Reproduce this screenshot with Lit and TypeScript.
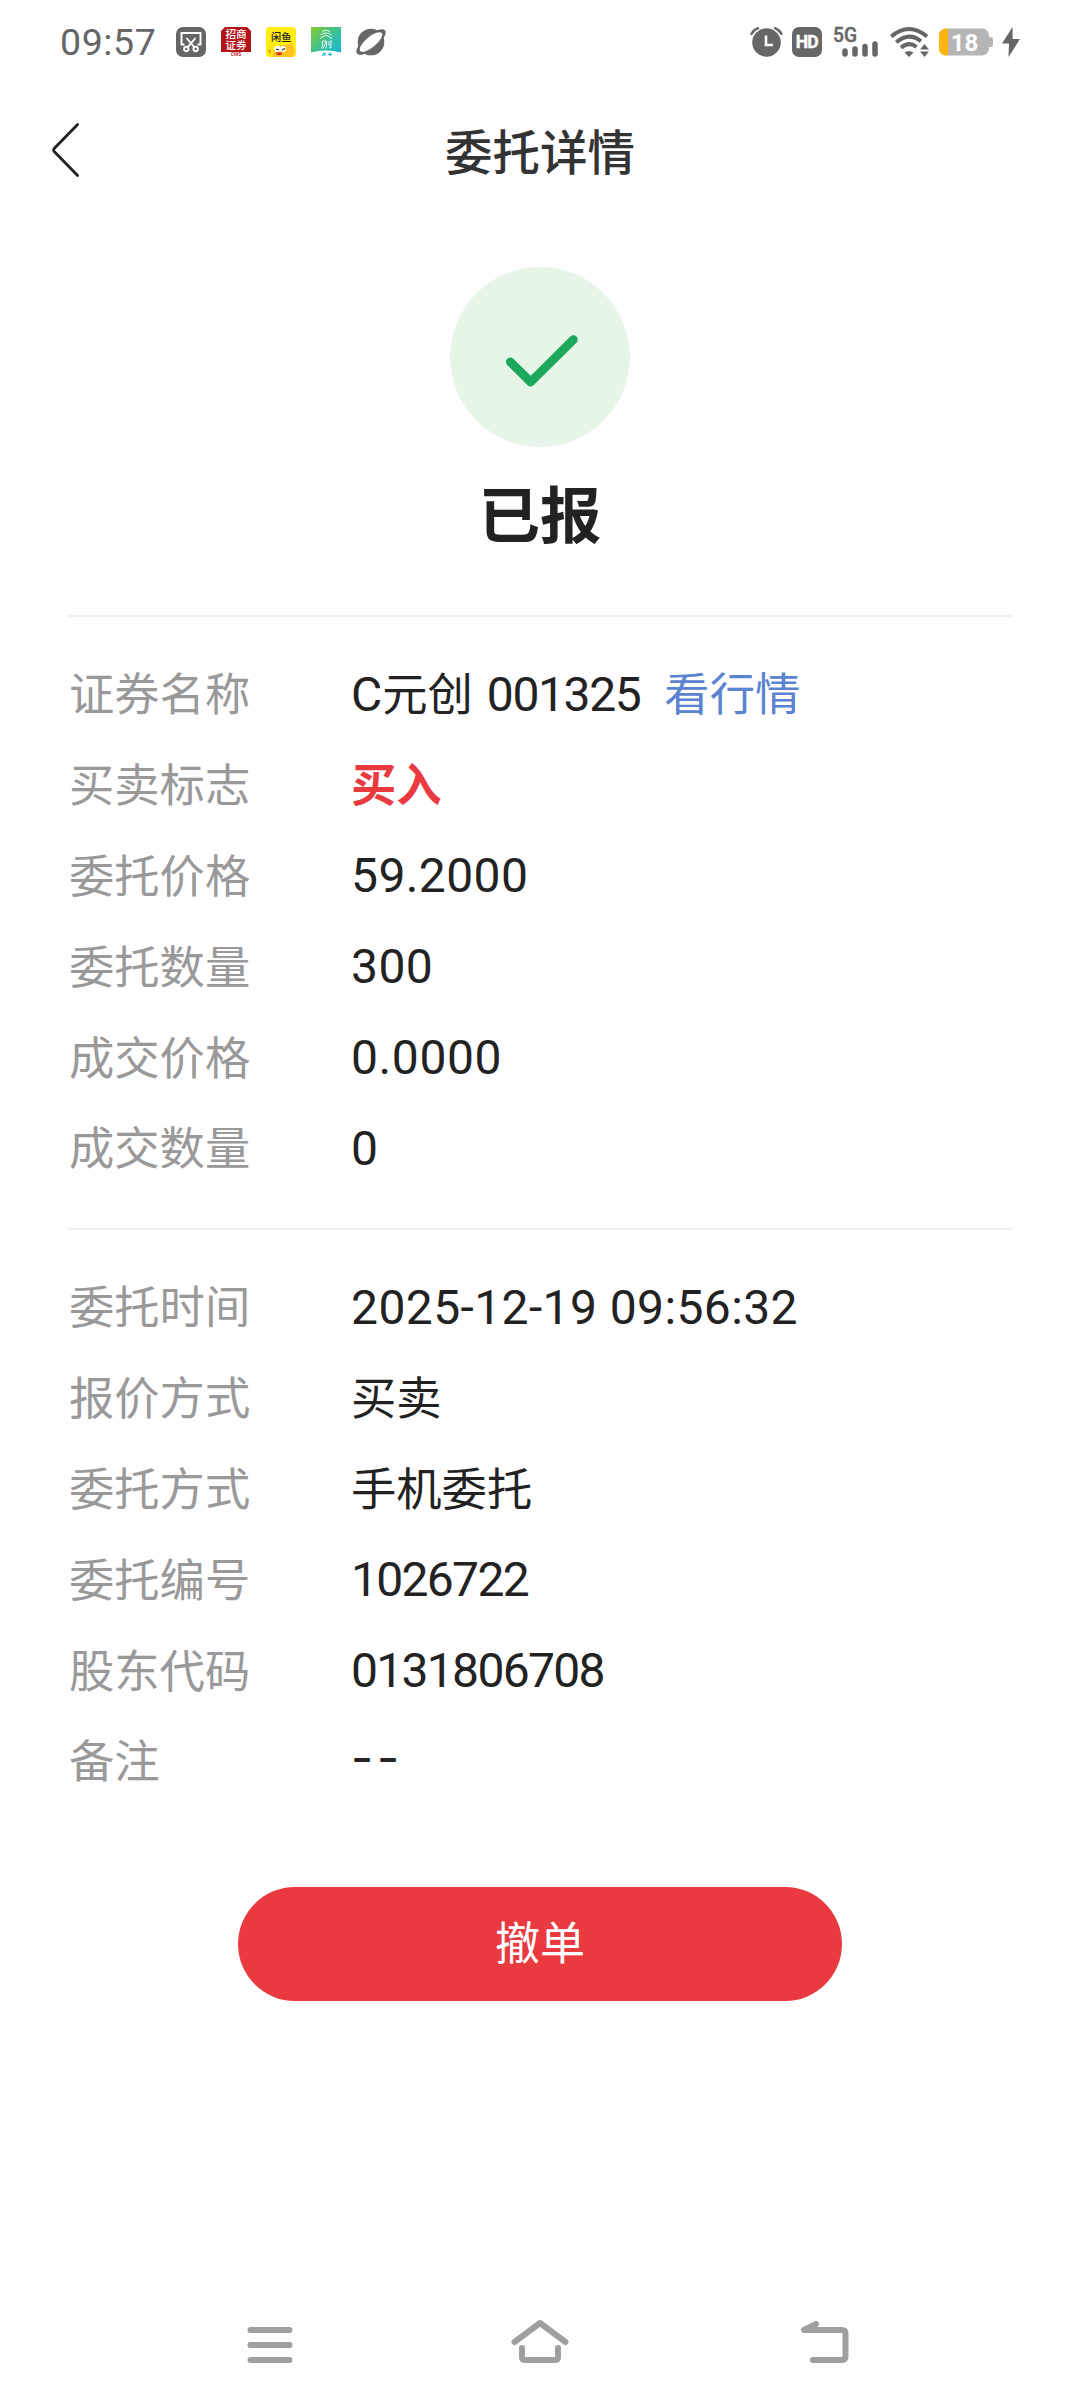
import { LitElement, html, css } from "lit";
import { customElement, property } from "lit/decorators.js";

interface Field {
  label: string;
  value: string;
  tracking?: number;
  kind?: "number" | "text" | "buy" | "dashes";
}

const orderFields: Field[] = [
  { label: "买卖标志", value: "买入", kind: "buy" },
  { label: "委托价格", value: "59.2000", kind: "number", tracking: 0.4 },
  { label: "委托数量", value: "300", kind: "number", tracking: 0.4 },
  { label: "成交价格", value: "0.0000", kind: "number", tracking: 0.6 },
  { label: "成交数量", value: "0", kind: "number", tracking: 0.6 },
];

const metaFields: Field[] = [
  { label: "委托时间", value: "2025-12-19 09:56:32", kind: "number", tracking: 0.4 },
  { label: "报价方式", value: "买卖" },
  { label: "委托方式", value: "手机委托" },
  { label: "委托编号", value: "1026722", kind: "number", tracking: -1.7 },
  { label: "股东代码", value: "0131806708", kind: "number", tracking: -1.7 },
  { label: "备注", value: "--", kind: "dashes", tracking: 4 },
];

@customElement("status-bar")
class StatusBar extends LitElement {
  static styles = css`
    :host {
      display: flex;
      justify-content: space-between;
      align-items: center;
      height: 84px;
      padding: 0 60px 0 60px;
      box-sizing: border-box;
      color: #666;
      font-family: Roboto, "Noto Sans CJK SC", sans-serif;
    }
    .side { display: flex; align-items: center; }
    .left { gap: 15px; }
    .time { width: 101px; font-size: 37.5px; line-height: 40px; letter-spacing: 0.6px; white-space: nowrap; }
    svg { display: block; flex: none; overflow: visible; }
    .hd { margin-left: 9px; }
    .signal { margin-left: 11px; }
    .wifi { margin-left: 12px; }
    .battery { margin-left: 10px; }
    .bolt { margin-left: 9px; }
    .b { font-weight: 700; }
    .m { font-weight: 500; }
  `;

  render() {
    return html`
      <div class="side left">
        <span class="time">09:57</span>
        <svg width="30" height="30" viewBox="0 0 30 30">
          <rect width="30" height="30" rx="7" fill="#666" />
          <g fill="none" stroke="#fff" stroke-width="1.9">
            <path d="M8.5 17.500H5.5V6h19v11.500h-3" />
            <path d="M10.5 11l7.8 9.2M19.5 11l-7.8 9.2" />
            <circle cx="10.3" cy="22" r="2.2" />
            <circle cx="19.7" cy="22" r="2.2" />
          </g>
        </svg>
        <svg width="30" height="30" viewBox="0 0 30 30">
          <path d="M4 0h22l4 4v21H0V4z" fill="#b3141a" />
          <rect y="25" width="30" height="5" fill="#fff" />
          <text class="m" x="15" y="11.4" font-size="10.6" text-anchor="middle" fill="#fff">招商</text>
          <text class="m" x="15" y="22.2" font-size="10.6" text-anchor="middle" fill="#fff">证券</text>
          <text class="b" x="15" y="29.400" font-size="4.8" text-anchor="middle" fill="#c8333a">CMS</text>
        </svg>
        <svg width="30" height="30" viewBox="0 0 30 30">
          <rect width="30" height="30" rx="4" fill="#ffec14" />
          <path d="M7 30c-1-5 1-9 6-11 6-2 11 0 12-4 4 5 4 11 2 15z" fill="#ffc21c" />
          <path d="M2 22l3 1 0 4-3-2z" fill="#f0b010" />
          <circle cx="11.5" cy="22" r="3.2" fill="#fff" />
          <circle cx="17" cy="22" r="3" fill="#fff" />
          <path d="M10 22l3 1M16 23l3-1.5" stroke="#222" stroke-width="1.3" />
          <ellipse cx="13" cy="26.6" rx="3" ry="1.6" fill="#d4352b" />
          <text class="m" x="15.2" y="13.6" font-size="10.2" text-anchor="middle" fill="#222">闲鱼</text>
        </svg>
        <svg width="30" height="30" viewBox="0 0 30 30">
          <defs>
            <linearGradient id="g" x1="0" y1="0" x2="1" y2="1">
              <stop offset="0" stop-color="#86cb2d" />
              <stop offset=".55" stop-color="#33bfa0" />
              <stop offset="1" stop-color="#14b4e8" />
            </linearGradient>
          </defs>
          <rect width="30" height="30" fill="url(#g)" />
          <path d="M0 25.5Q15 21.5 30 25.5V30H0z" fill="#fff" />
          <g fill="none" stroke="#e6fbf2" stroke-width="1">
            <path d="M11 5q4-3.600 8 0M9.500 8q5.500-4 11 0M9 11.500l6-3.500 6 3.500" />
            <path d="M11.500 14v4.500l-1 3M11.500 14h4l-3.500 7.500M15.500 14v5l-1 2.500M18 14v5M20 13v7.500l-2 .5" />
          </g>
          <path d="M11.500 29l1.500-3.300M14 25.700v3.300M17 27.400h4M19 25.500v3.600" stroke="#25b5dd" stroke-width="1.200" />
        </svg>
        <svg width="30" height="30" viewBox="0 0 30 30">
          <circle cx="15" cy="15" r="13.300" fill="#666" />
          <ellipse cx="15" cy="15" rx="18.200" ry="6.800" fill="#666" transform="rotate(-40 15 15)" />
          <ellipse cx="15" cy="15" rx="14" ry="5.200" fill="#fefefe" transform="rotate(-40 15 15)" />
        </svg>
      </div>
      <div class="side">
        <svg class="alarm" width="33" height="30" viewBox="0 0 33 30">
          <circle cx="16.500" cy="15.500" r="14.300" fill="#666" />
          <path d="M1.500 7Q3.500 3 8 1.200M31.500 7Q29.500 3 25 1.200" fill="none" stroke="#fefefe" stroke-width="5" />
          <path d="M1.500 7Q3.500 3 8 1.200M31.500 7Q29.500 3 25 1.200" fill="none" stroke="#666" stroke-width="2.400" stroke-linecap="round" />
          <path d="M16 8.500V18h7" fill="none" stroke="#fff" stroke-width="2.600" />
        </svg>
        <svg class="hd" width="30" height="30" viewBox="0 0 30 30">
          <rect width="30" height="30" rx="7" fill="#666" />
          <text class="b" x="15.200" y="21.300" font-size="17.500" text-anchor="middle" textLength="23" fill="#fff" stroke="#fff" stroke-width=".4">HD</text>
        </svg>
        <svg class="signal" width="45" height="30" viewBox="0 0 45 30">
          <text class="m" x="0" y="14.500" font-size="19.500" textLength="24" lengthAdjust="spacingAndGlyphs" fill="#666" stroke="#666" stroke-width=".4">5G</text>
          <path d="M12 24v3M22 22v5M32 19.500V27M42 17v10" stroke="#666" stroke-width="5.500" stroke-linecap="round" />
        </svg>
        <svg class="wifi" width="39" height="30" viewBox="0 0 39 30">
          <g fill="none" stroke="#666" stroke-width="4">
            <path d="M1.300 9.500Q19 -5.500 37 9.500" />
            <path d="M6.300 15.300Q19 4.500 31 14.300" />
            <path d="M11 20.800Q19 14 26.500 20" />
          </g>
          <path d="M14.500 25.500Q19 22.300 23.500 25.500L19 30z" fill="#666" />
          <path d="M34.500 17l4.500 5.500h-9zM34.500 30l4.500-5.500h-9z" fill="#666" />
        </svg>
        <svg class="battery" width="54" height="28" viewBox="0 0 54 28">
          <defs><clipPath id="c"><rect y=".5" width="50" height="27" rx="7" /></clipPath></defs>
          <path d="M50 9h1.500q2.500 0 2.500 2.500v5q0 2.500-2.500 2.500H50z" fill="#b5b5b5" />
          <g clip-path="url(#c)">
            <rect width="50" height="28" fill="#b5b5b5" />
            <rect width="9" height="28" fill="#ffb50f" />
          </g>
          <text class="b" x="25.500" y="22.500" font-size="24" text-anchor="middle" fill="#fff">18</text>
        </svg>
        <svg class="bolt" width="18" height="30" viewBox="0 0 18 30">
          <path d="M10.500 0L0 16.500h7L6.500 30 18 12h-7.300z" fill="#666" />
        </svg>
      </div>
    `;
  }
}

@customElement("detail-row")
class DetailRow extends LitElement {
  static styles = css`
    :host {
      display: flex;
      align-items: center;
      height: 90.800px;
      font-size: 45.300px;
      line-height: 84px;
      white-space: nowrap;
      color: #222;
    }
    .label, .text, .buy { padding-bottom: 6px; }
    .label { flex: 0 0 282px; color: #999; }
    .number { padding-top: 1px; font-family: Roboto, sans-serif; font-size: 48px; }
    .dashes { padding-bottom: 6px; font-family: Inter, sans-serif; font-size: 48px; }
    .buy { color: #e93a3f; font-weight: 700; }
  `;

  @property({ attribute: false }) field: Field = { label: "", value: "" };

  render() {
    const { label, value, kind = "text", tracking = 0 } = this.field;
    return html`
      <span class="label">${label}</span>
      <slot><span class=${kind} style="letter-spacing:${tracking}px">${value}</span></slot>
    `;
  }
}

@customElement("app-root")
class AppRoot extends LitElement {
  static styles = css`
    :host {
      display: flex;
      flex-direction: column;
      height: 2408px;
      background: #fefefe;
      color: #222;
      font-family: "Noto Sans CJK SC", sans-serif;
    }
    svg { display: block; }
    .header {
      display: grid;
      grid-template-columns: 1fr auto 1fr;
      align-items: center;
      height: 132px;
      padding: 0 51px;
    }
    .title { padding-bottom: 1px; font-size: 47.500px; font-weight: 500; line-height: 60px; color: #333; }
    .result {
      display: flex;
      flex-direction: column;
      align-items: center;
      padding-top: 51px;
      height: 347px;
      box-sizing: border-box;
    }
    .badge { width: 180px; height: 180px; border-radius: 50%; background: #e7f5e9; }
    .state { margin-top: 20px; font-size: 61.500px; font-weight: 700; line-height: 90px; }
    .section { margin: 0 68px; padding: 32px 1px 0; border-top: 2px solid #f0f0f0; }
    .first { height: 613px; box-sizing: border-box; margin-top: 52px; }
    .security { display: flex; align-items: center; }
    .cjk, .link { padding-bottom: 6px; }
    .num { padding-top: 1px; font-family: Roboto, sans-serif; font-size: 48px; letter-spacing: -1.400px; }
    .letter { padding-top: 1px; font-family: Roboto, sans-serif; font-size: 48px; }
    .space { width: 14px; }
    .link { margin-left: 24px; color: #5b84d0; }
    .cancel {
      align-self: center;
      width: 604px;
      height: 114px;
      margin-top: 80px;
      border: 0;
      border-radius: 57px;
      background: #e93a3f;
      color: #fff;
      font: 400 45px/108px "Noto Sans CJK SC", sans-serif;
      padding: 0 0 6px;
    }
    .nav {
      display: grid;
      grid-template-columns: 264px 291px auto;
      justify-content: start;
      margin-top: auto;
      height: 93px;
      padding-left: 246px;
    }
    .nav svg { fill: none; stroke: #9f9f9f; stroke-width: 6; stroke-linecap: round; stroke-linejoin: round; }
  `;

  render() {
    return html`
      <status-bar></status-bar>
      <div class="header">
        <svg width="30" height="56" viewBox="0 0 30 56">
          <path d="M26.600 2.500L3.200 26.500Q2 28 3.200 29.500L26.600 53.500" fill="none" stroke="#222" stroke-width="2.800" stroke-linecap="round" />
        </svg>
        <span class="title">委托详情</span>
      </div>
      <div class="result">
        <svg class="badge" viewBox="0 0 180 180">
          <path d="M60.300 94.800L80.700 115L123.400 72.600" fill="none" stroke="#1ca95b" stroke-width="8.800" stroke-linecap="round" stroke-linejoin="round" />
        </svg>
        <div class="state">已报</div>
      </div>
      <div class="section first">
        <detail-row .field=${{ label: "证券名称", value: "" }}>
          <div class="security">
            <span class="letter">C</span><span class="cjk">元创</span><span class="space"></span>
            <span class="num">001325</span><span class="link">看行情</span>
          </div>
        </detail-row>
        ${orderFields.map((f) => html`<detail-row .field=${f}></detail-row>`)}
      </div>
      <div class="section">
        ${metaFields.map((f) => html`<detail-row .field=${f}></detail-row>`)}
      </div>
      <button class="cancel">撤单</button>
      <div class="nav">
        <svg width="48" height="52" viewBox="0 0 48 52">
          <path d="M4.500 15h39M4.500 30h39M4.500 45h39" />
        </svg>
        <svg width="60" height="52" viewBox="0 0 60 52">
          <path d="M4.500 27L30 8l25.500 19M12 33v9q0 3 3 3h30q3 0 3-3v-9" />
        </svg>
        <svg width="50" height="52" viewBox="0 0 50 52">
          <path d="M15 9L3 15h38q3.500 0 3.500 3.500v23q0 3.500-3.500 3.500H12" />
        </svg>
      </div>
    `;
  }
}
